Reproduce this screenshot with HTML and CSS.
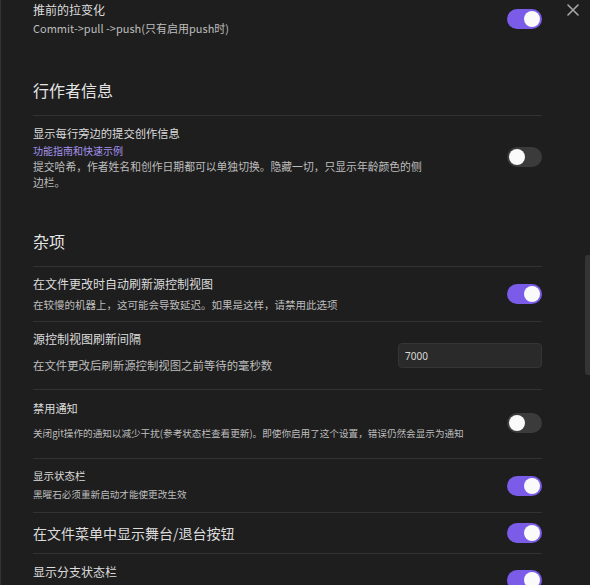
FILE: index.html
```html
<!DOCTYPE html>
<html lang="zh">
<head>
<meta charset="utf-8">
<title>设置</title>
<link rel="stylesheet" href="styles.css">
</head>
<body>
<div class="pane">
  <button class="close" aria-label="关闭">
    <svg width="12" height="12" viewBox="0 0 12 12"><path d="M1 1L11 11M11 1L1 11" stroke="#a8a8a8" stroke-width="1.6" stroke-linecap="round"/></svg>
  </button>

  <div class="item row-a">
    <div class="info">
      <div class="name fs12">推前的拉变化</div>
      <div class="desc fs11">Commit-&gt;pull -&gt;push(只有启用push时)</div>
    </div>
    <div class="control"><div class="toggle on"><span class="knob"></span></div></div>
  </div>

  <div class="heading">行作者信息</div>

  <div class="item row-b">
    <div class="info">
      <div class="name fs113">显示每行旁边的提交创作信息</div>
      <div class="link">功能指南和快速示例</div>
      <div class="desc fs108 narrow">提交哈希，作者姓名和创作日期都可以单独切换。隐藏一切，只显示年龄颜色的侧边栏。</div>
    </div>
    <div class="control"><div class="toggle"><span class="knob"></span></div></div>
  </div>

  <div class="heading">杂项</div>

  <div class="item row-c">
    <div class="info">
      <div class="name fs12">在文件更改时自动刷新源控制视图</div>
      <div class="desc fs105">在较慢的机器上，这可能会导致延迟。如果是这样，请禁用此选项</div>
    </div>
    <div class="control"><div class="toggle on"><span class="knob"></span></div></div>
  </div>

  <div class="item row-d">
    <div class="info">
      <div class="name fs12">源控制视图刷新间隔</div>
      <div class="desc fs114">在文件更改后刷新源控制视图之前等待的毫秒数</div>
    </div>
    <div class="control"><input class="text-input" type="text" value="7000"></div>
  </div>

  <div class="item row-e">
    <div class="info">
      <div class="name fs112">禁用通知</div>
      <div class="desc fs96">关闭git操作的通知以减少干扰(参考状态栏查看更新)。即使你启用了这个设置，错误仍然会显示为通知</div>
    </div>
    <div class="control"><div class="toggle"><span class="knob"></span></div></div>
  </div>

  <div class="item row-f">
    <div class="info">
      <div class="name fs105">显示状态栏</div>
      <div class="desc fs96">黑曜石必须重新启动才能使更改生效</div>
    </div>
    <div class="control"><div class="toggle on"><span class="knob"></span></div></div>
  </div>

  <div class="item row-g">
    <div class="info">
      <div class="name fs14">在文件菜单中显示舞台/退台按钮</div>
    </div>
    <div class="control"><div class="toggle on"><span class="knob"></span></div></div>
  </div>

  <div class="item row-h">
    <div class="info">
      <div class="name fs12 lh20">显示分支状态栏</div>
    </div>
    <div class="control"><div class="toggle on"><span class="knob"></span></div></div>
  </div>

  <div class="scroll-thumb"></div>
</div>
</body>
</html>
```
FILE: styles.css
```css
html, body {
  margin: 0;
  padding: 0;
  height: 100%;
  background: #1e1e1e;
  overflow: hidden;
}

body {
  font-family: "Noto Sans CJK SC", "Noto Sans", sans-serif;
  color: #dcdcdc;
}

.pane {
  position: relative;
  height: 100%;
  box-sizing: border-box;
  border-left: 1px solid #343434;
  padding: 0 48px 0 32px;
  overflow: hidden;
}

.close {
  position: absolute;
  top: 4px;
  right: 11px;
  width: 12px;
  height: 12px;
  padding: 0;
  border: 0;
  background: none;
  display: flex;
}

.item {
  display: flex;
  align-items: center;
  border-top: 1px solid #323232;
}

.row-a { border-top: 0; padding: 1px 0 10px; }
.heading + .item { border-top: 0; }

.info {
  flex: 1 1 auto;
  min-width: 0;
}

.control {
  flex: 0 0 auto;
  display: flex;
  align-items: center;
}

.name {
  line-height: 18px;
  color: #dcdcdc;
}

.desc {
  line-height: 16px;
  color: #bdbdbd;
}

.row-a .desc { line-height: 18px; }

.link {
  font-size: 10px;
  line-height: 14px;
  margin-top: 2px;
  color: #a493ec;
}

.narrow { max-width: 392px; }

.fs12 { font-size: 12px; }
.fs11 { font-size: 11px; }
.fs113 { font-size: 11.3px; }
.fs108 { font-size: 10.8px; }
.fs105 { font-size: 10.5px; }
.fs114 { font-size: 11.4px; }
.fs112 { font-size: 11.2px; }
.fs96 { font-size: 9.6px; }
.fs14 { font-size: 14px; line-height: 20px; }
.lh20 { line-height: 20px; }

.heading {
  font-size: 16px;
  line-height: 24px;
  color: #e4e4e4;
  padding: 31px 0 13px;
  border-bottom: 1px solid #323232;
}

.row-b { padding: 8px 0 8px; }

.row-c { padding: 8px 0 8px; }
.row-c .desc { margin-top: 4px; }

.row-d { padding: 8px 0 8px; }
.row-d .desc { margin-top: 9px; }
.row-d .info { padding-bottom: 8px; }

.row-e { padding: 9px 0 11px; }
.row-e .desc { margin-top: 8px; }
.row-e .info { padding-bottom: 6px; }

.row-f { padding: 8px 0 7px; }
.row-f .desc { margin-top: 1px; }
.row-f .info { padding-bottom: 3px; }

.row-g { padding: 10px 0 10px; }

.row-h { padding: 8px 0 0; }
.row-h .info { padding-bottom: 16px; }

.toggle {
  width: 35px;
  height: 20px;
  box-sizing: border-box;
  border-radius: 10px;
  padding: 2px;
  background: #3b3b3b;
  display: flex;
  align-items: center;
  justify-content: flex-start;
}

.toggle.on {
  background: #7a5ce8;
  justify-content: flex-end;
}

.knob {
  width: 16px;
  height: 16px;
  border-radius: 50%;
  background: #fafafa;
}

.text-input {
  width: 144px;
  height: 25px;
  box-sizing: border-box;
  background: #2a2a2a;
  border: 1px solid #353535;
  border-radius: 4px;
  color: #d8d8d8;
  font-family: "Noto Sans", sans-serif;
  font-size: 10px;
  padding: 0 6px;
  outline: none;
}

.scroll-thumb {
  position: absolute;
  right: 0;
  top: 255px;
  width: 5px;
  height: 120px;
  background: #343434;
  border-radius: 3px 0 0 3px;
}
```
